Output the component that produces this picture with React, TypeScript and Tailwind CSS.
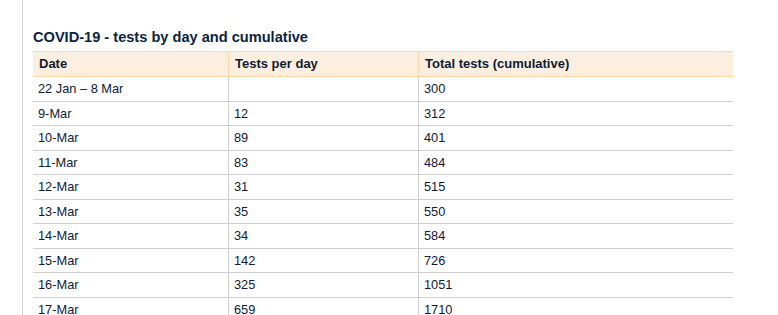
import React from "react";

const rows: [string, string, string][] = [
  ["22 Jan – 8 Mar", "", "300"],
  ["9-Mar", "12", "312"],
  ["10-Mar", "89", "401"],
  ["11-Mar", "83", "484"],
  ["12-Mar", "31", "515"],
  ["13-Mar", "35", "550"],
  ["14-Mar", "34", "584"],
  ["15-Mar", "142", "726"],
  ["16-Mar", "325", "1051"],
  ["17-Mar", "659", "1710"],
];

const App = () => {
  return (
    <div
      className="w-full h-screen overflow-hidden bg-white"
      style={{ fontFamily: '"Liberation Sans", Arial, sans-serif' }}
    >
      <div className="ml-[22px] h-full border-l border-[#d4d4d4] pl-[10px] pt-[29px]">
        <h2 className="text-[14.6px] leading-[17px] font-bold text-[#0c2340] mb-[5px]">
          COVID-19 - tests by day and cumulative
        </h2>
        <div className="w-[700px]">
          <div className="grid grid-cols-[195px_190px_315px] h-[26px] bg-[#fdefdf] border-y border-[#fdd6ad] text-[13px] font-bold text-[#0f1b33]">
            <div className="flex items-center pl-[6px]">Date</div>
            <div className="flex items-center pl-[6px] border-l border-[#fdd6ad]">Tests per day</div>
            <div className="flex items-center pl-[6px] border-l border-[#fdd6ad]">Total tests (cumulative)</div>
          </div>
          {rows.map(([date, perDay, total]) => (
            <div
              key={date}
              className="grid grid-cols-[195px_190px_315px] h-[24.5px] border-b border-[#cfcfcf] text-[12.8px] text-[#101a36]"
            >
              <div className="flex items-center pl-[5px]">{date}</div>
              <div className="flex items-center pl-[5px] border-l border-[#cfcfcf]">{perDay}</div>
              <div className="flex items-center pl-[5px] border-l border-[#cfcfcf]">{total}</div>
            </div>
          ))}
        </div>
      </div>
    </div>
  );
};

export default App;
